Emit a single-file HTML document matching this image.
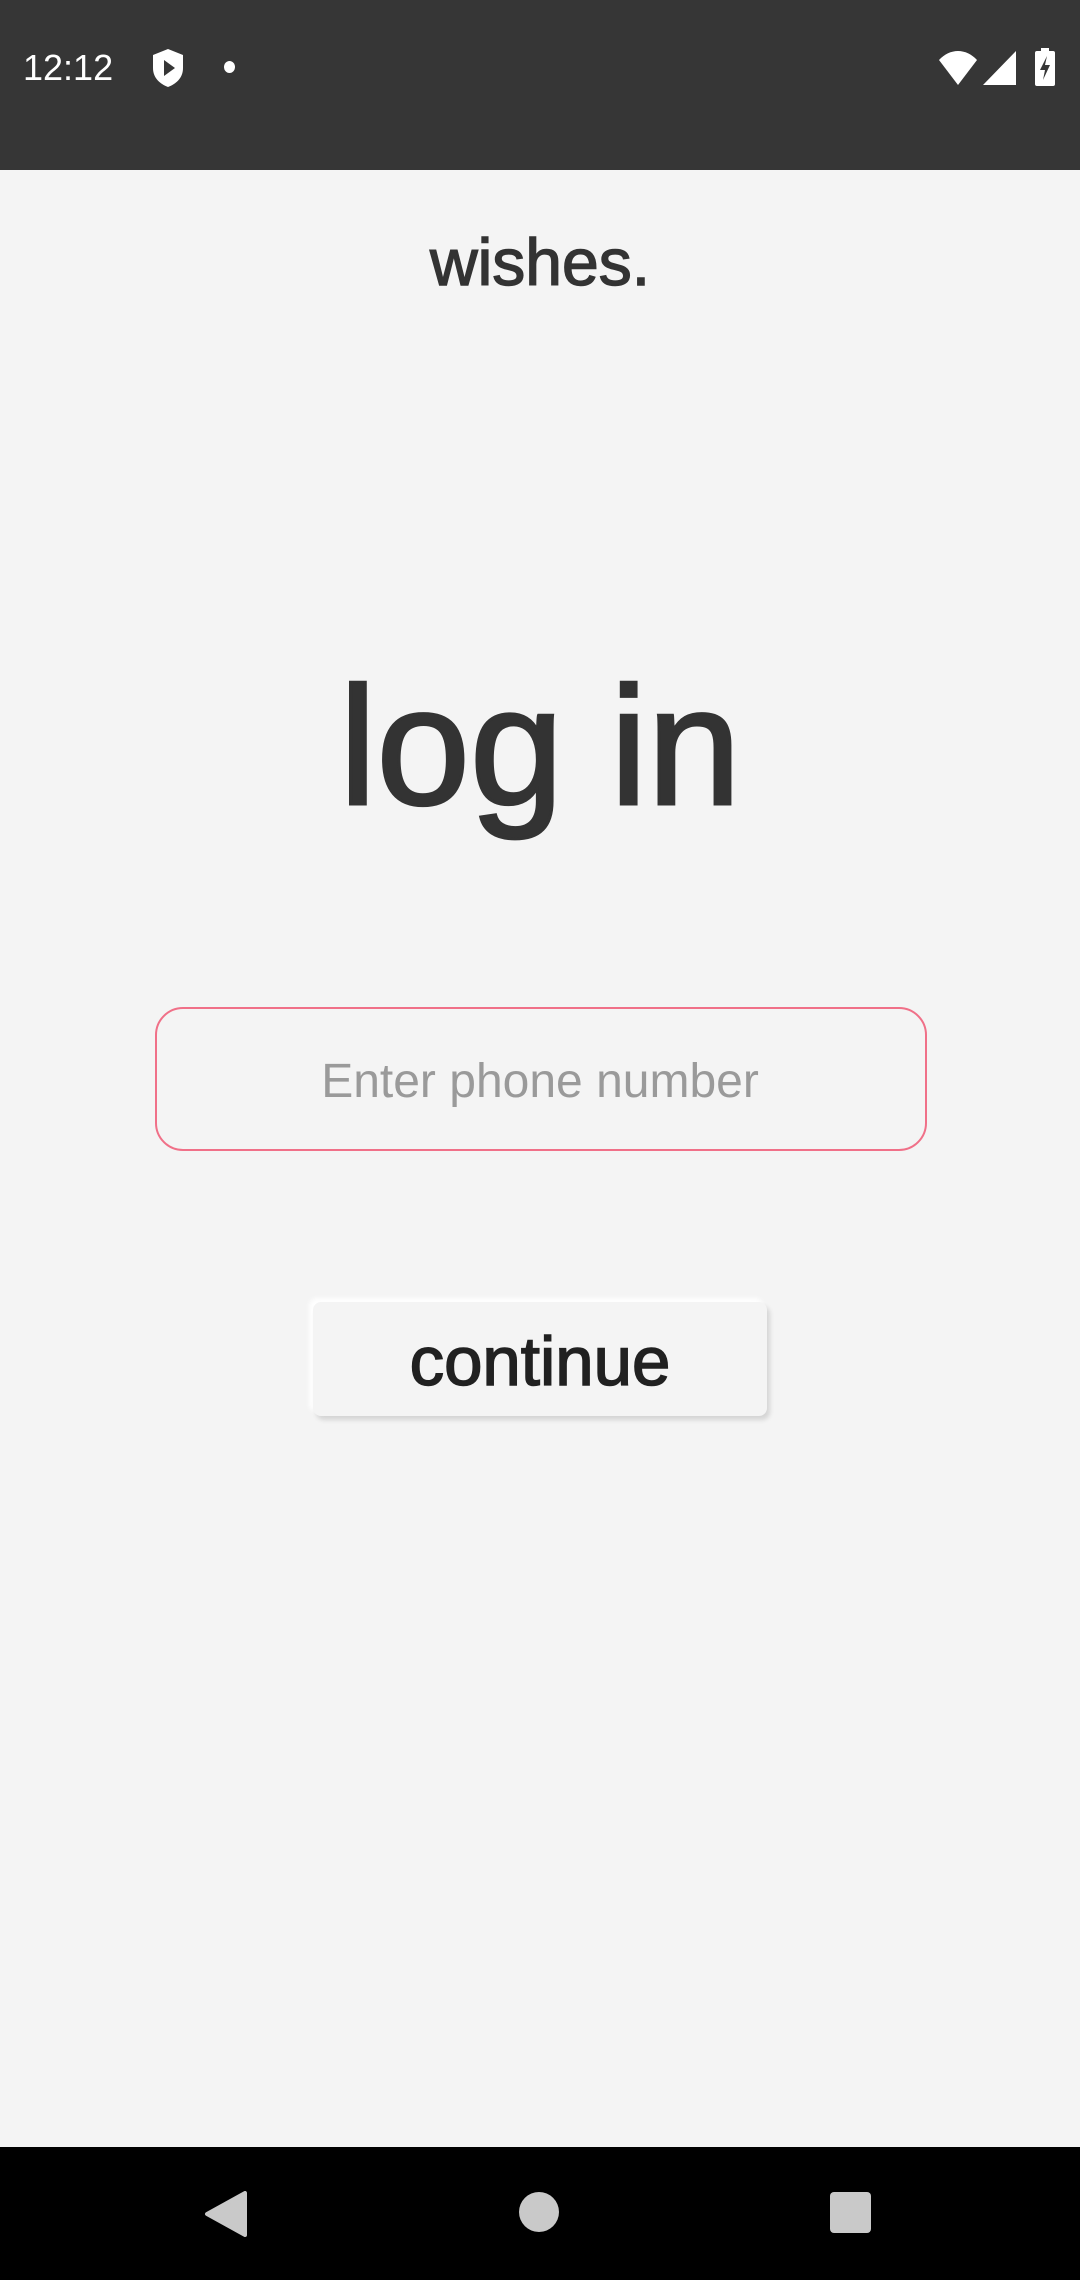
<!DOCTYPE html>
<html><head><meta charset="utf-8"><style>
html,body{margin:0;padding:0}
body{width:1080px;height:2280px;position:relative;background:#f4f4f4;font-family:"Liberation Sans",Arial,sans-serif;overflow:hidden}
.sb{position:absolute;left:0;top:0;width:1080px;height:170px;background:#363636}
.nav{position:absolute;left:0;top:2147px;width:1080px;height:133px;background:#000}
.t{position:absolute;left:0;width:1080px;text-align:center;white-space:nowrap}
.inp{position:absolute;left:155px;top:1007px;width:768px;height:140px;border:2.5px solid #f07088;border-radius:28px;box-sizing:content-box}
.btn{position:absolute;left:313px;top:1302px;width:454px;height:114px;background:#f4f4f4;border-radius:8px;box-shadow:3px 4px 5px rgba(0,0,0,0.13),-4px -4px 5px rgba(255,255,255,0.95)}
</style></head><body>
<div class="sb">
  <div style="position:absolute;left:23px;top:48px;color:#fff;font-size:36px;line-height:40px">12:12</div>
  <svg style="position:absolute;left:150px;top:48px" width="36" height="40" viewBox="0 0 36 40"><path d="M18 1 L33 7 V20 C33 30 26 36 18 39 C10 36 3 30 3 20 V7 Z" fill="#fff"/><path d="M14 12 L25 20 L14 28 Z" fill="#363636"/></svg>
  <div style="position:absolute;left:224px;top:61px;width:11px;height:12px;border-radius:50%;background:#fff"></div>
  <svg style="position:absolute;left:938px;top:50px" width="40" height="36" viewBox="0 0 40 36"><path d="M20 35 L1 10 C12 -2 28 -2 39 10 Z" fill="#fff"/></svg>
  <svg style="position:absolute;left:982px;top:50px" width="36" height="36" viewBox="0 0 36 36"><path d="M34 1 V35 H1 Z" fill="#fff"/><path d="M24 16 V32 H30 V10 Z" fill="#363636" opacity="0.0"/></svg>
  <svg style="position:absolute;left:1034px;top:48px" width="22" height="38" viewBox="0 0 22 38"><rect x="7" y="0" width="8" height="4" fill="#fff"/><rect x="1" y="3" width="20" height="35" rx="2" fill="#fff"/><path d="M13 8 L6 22 H11 L9 32 L16 17 H11 Z" fill="#363636"/></svg>
</div>

<div class="t" style="top:222px;font-size:66px;line-height:80px;color:#333;-webkit-text-stroke:1.4px #333">wishes.</div>
<div class="t" style="top:651px;font-size:168px;line-height:190px;color:#333;-webkit-text-stroke:3px #333">log in</div>

<div class="inp"></div>
<div class="t" style="top:1052px;font-size:48px;line-height:60px;color:#9a9a9a">Enter phone number</div>

<div class="btn"></div>
<div class="t" style="top:1322px;font-size:69px;line-height:80px;color:#212121;-webkit-text-stroke:1.5px #212121">continue</div>

<div class="nav">
  <svg style="position:absolute;left:203px;top:44px" width="44" height="46" viewBox="0 0 44 46"><path d="M42 2 V44 L4 23 Z" fill="#c9c9c9" stroke="#c9c9c9" stroke-width="4" stroke-linejoin="round"/></svg>
  <div style="position:absolute;left:519px;top:45px;width:40px;height:40px;border-radius:50%;background:#c9c9c9"></div>
  <div style="position:absolute;left:830px;top:45px;width:41px;height:41px;border-radius:4px;background:#c9c9c9"></div>
</div>
</body></html>
